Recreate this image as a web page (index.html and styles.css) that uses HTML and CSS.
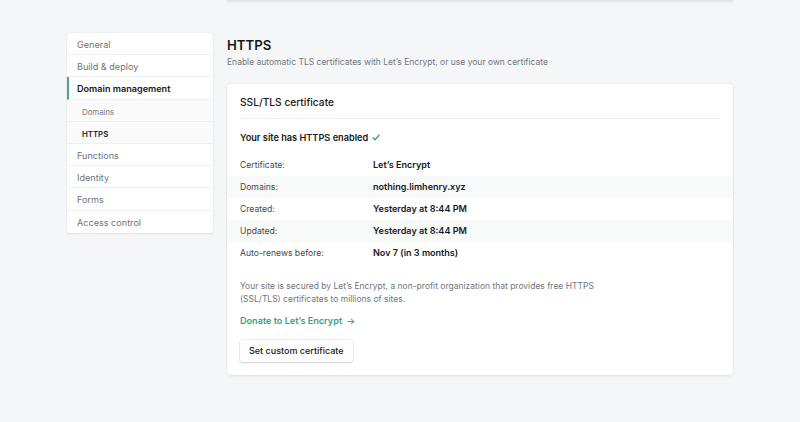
FILE: index.html
```html
<!DOCTYPE html>
<html>
<head>
<meta charset="utf-8">
<link rel="stylesheet" href="styles.css">
</head>
<body>
<div class="topbar"><div class="topcard"></div></div>
<div class="layout">
  <nav class="sidenav">
    <a class="nav-item">General</a>
    <a class="nav-item">Build &amp; deploy</a>
    <a class="nav-item active">Domain management</a>
    <a class="nav-item sub">Domains</a>
    <a class="nav-item sub current">HTTPS</a>
    <a class="nav-item">Functions</a>
    <a class="nav-item">Identity</a>
    <a class="nav-item">Forms</a>
    <a class="nav-item">Access control</a>
  </nav>
  <main class="main">
    <h1 class="page-title">HTTPS</h1>
    <p class="page-sub">Enable automatic TLS certificates with Let’s Encrypt, or use your own certificate</p>
    <section class="card">
      <h2 class="card-title">SSL/TLS certificate</h2>
      <p class="status">Your site has HTTPS enabled <svg class="check" width="8" height="7" viewBox="0 0 8 7"><path d="M1 3.8 L3 5.8 L7 1.2" fill="none" stroke="#34a58d" stroke-width="1.4" stroke-linecap="round" stroke-linejoin="round"/></svg></p>
      <dl class="rows">
        <div class="row"><dt>Certificate:</dt><dd>Let’s Encrypt</dd></div>
        <div class="row"><dt>Domains:</dt><dd>nothing.limhenry.xyz</dd></div>
        <div class="row"><dt>Created:</dt><dd>Yesterday at 8:44 PM</dd></div>
        <div class="row"><dt>Updated:</dt><dd>Yesterday at 8:44 PM</dd></div>
        <div class="row"><dt>Auto-renews before:</dt><dd>Nov 7 (in 3 months)</dd></div>
      </dl>
      <p class="note">Your site is secured by Let’s Encrypt, a non-profit organization that provides free HTTPS (SSL/TLS) certificates to millions of sites.</p>
      <a class="donate">Donate to Let’s Encrypt <span class="arrow">→</span></a>
      <div class="actions"><button class="btn">Set custom certificate</button></div>
    </section>
  </main>
</div>
</body>
</html>
```

FILE: styles.css
```css
* { box-sizing: border-box; }
html, body { margin: 0; padding: 0; }
body {
  background: #f5f6f7;
  font-family: Inter, "Noto Sans", sans-serif;
  color: #1f2326;
  width: 800px;
  height: 422px;
  overflow: hidden;
}
.topbar { height: 2px; padding-left: 227px; }
.topcard {
  width: 506px;
  height: 1px;
  background: #e2e4e6;
  box-shadow: 0 1px 2px rgba(0,0,0,0.12);
  border-radius: 0 0 4px 4px;
}
.layout {
  display: flex;
  align-items: flex-start;
  gap: 14px;
  padding-left: 67px;
  padding-top: 31px;
}
.sidenav {
  width: 146px;
  background: #fff;
  border-radius: 3px;
  box-shadow: 0 0 0 1px rgba(0,0,0,0.025), 0 1px 2px rgba(0,0,0,0.05);
  display: flex;
  flex-direction: column;
  overflow: hidden;
}
.nav-item {
  display: block;
  height: 22.2px;
  padding-top: 2px;
  line-height: 20px;
  padding-left: 8px;
  font-size: 9.1px;
  color: #6e7378;
  border-bottom: 1px solid #eef0f1;
  border-left: 2px solid transparent;
}
.nav-item:last-child { border-bottom: none; }
.nav-item.active {
  border-left-color: #4da496;
  color: #16191b;
  font-weight: 600;
}
.nav-item.sub {
  background: #fafafa;
  padding-left: 13px;
  font-size: 7.8px;
  color: #777c80;
}
.nav-item.sub.current { color: #16191b; font-weight: 600; }
.main { width: 506px; }
.page-title {
  margin: 4px 0 0;
  font-size: 13.2px;
  font-weight: 600;
  line-height: 16px;
  color: #16191b;
}
.page-sub {
  margin: 3px 0 0;
  font-size: 8.5px;
  line-height: 12px;
  color: #70767b;
}
.card {
  margin-top: 15.6px;
  background: #fff;
  border-radius: 4px;
  box-shadow: 0 0 0 1px rgba(0,0,0,0.025), 0 1px 3px rgba(0,0,0,0.08);
  padding: 12.7px 0 13px;
}
.card-title {
  margin: 0 13px;
  padding-bottom: 8.5px;
  border-bottom: 1px solid #eef0f1;
  font-size: 10.2px;
  font-weight: 500;
  line-height: 13px;
  color: #16191b;
}
.status {
  margin: 12px 13px 0;
  font-size: 9.2px;
  font-weight: 600;
  line-height: 13px;
  color: #16191b;
}
.check { vertical-align: 0; margin-left: 1px; }
.rows { margin: 10px 0 0; }
.row {
  display: flex;
  height: 22px;
  align-items: center;
  padding-left: 13px;
}
.row:nth-child(even) { background: #f8f9f9; }
.row dt {
  width: 133px;
  font-size: 8.6px;
  color: #45494d;
}
.row dd {
  margin: 0;
  font-size: 9.05px;
  font-weight: 600;
  color: #16191b;
}
.note {
  margin: 16px 13px 0;
  width: 365px;
  font-size: 8.5px;
  line-height: 13px;
  color: #70767b;
}
.donate {
  display: block;
  margin: 8px 13px 0;
  font-size: 9.1px;
  font-weight: 600;
  line-height: 13px;
  color: #3a9e89;
}
.arrow { margin-left: 2px; }
.actions { margin: 13px 13px 0; }
.btn {
  display: block;
  font-family: Inter, "Noto Sans", sans-serif;
  font-size: 9px;
  font-weight: 500;
  color: #16191b;
  background: #fff;
  border: none;
  border-radius: 3px;
  height: 22px;
  padding: 0 9px;
  box-shadow: 0 0 0 1px rgba(0,0,0,0.06), 0 1px 2px rgba(0,0,0,0.12);
}
```
